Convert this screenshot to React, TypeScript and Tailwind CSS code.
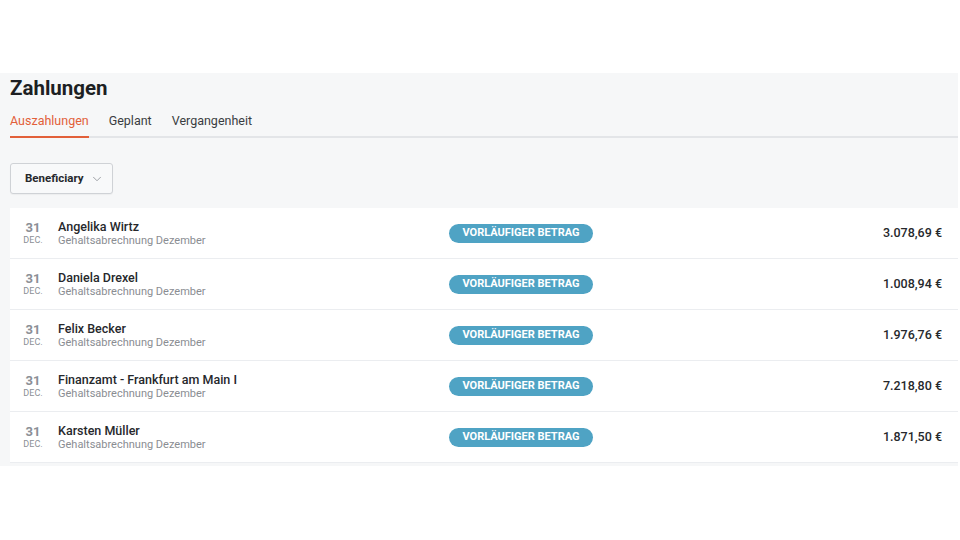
import { ChevronDown } from 'lucide-react';

const payouts = [
  { id: 1, name: 'Angelika Wirtz', amount: '3.078,69 €' },
  { id: 2, name: 'Daniela Drexel', amount: '1.008,94 €' },
  { id: 3, name: 'Felix Becker', amount: '1.976,76 €' },
  { id: 4, name: 'Finanzamt - Frankfurt am Main I', amount: '7.218,80 €' },
  { id: 5, name: 'Karsten Müller', amount: '1.871,50 €' },
];

const tabs = ['Auszahlungen', 'Geplant', 'Vergangenheit'];

const App = () => {
  return (
    <div className="w-[960px] h-[540px] bg-white pt-[73px] font-['Roboto',sans-serif]">
      <div className="w-[958px] h-[393px] bg-[#f6f7f8] pl-[10px] overflow-hidden">
        <h1 className="text-[20.5px] font-bold text-[#1d1f23] leading-[28px] pt-[1px]">Zahlungen</h1>

        {/* Tabs */}
        <div className="flex gap-[20px] mt-[4px] border-b-[2px] border-[#e3e5e8] h-[32px]">
          {tabs.map((t, i) => (
            <div
              key={t}
              className={
                i === 0
                  ? 'text-[12.5px] text-[#e2603a] border-b-[2px] border-[#e2603a] -mb-[2px] pt-[2px] leading-[26px]'
                  : 'text-[12.5px] text-[#3a3d42] pt-[2px] leading-[26px]'
              }
            >
              {t}
            </div>
          ))}
        </div>

        {/* Filter */}
        <div className="mt-[25px]">
          <button className="flex items-center h-[31px] w-[103px] border border-[#cfd2d6] rounded-[3px] bg-[#f8f9fa] pl-[14px] shadow-[0_1px_1px_rgba(0,0,0,0.04)]">
            <span className="text-[11.5px] font-bold text-[#26282c]">Beneficiary</span>
            <ChevronDown className="ml-[6px] text-[#8a8e94]" size={14} strokeWidth={1.4} />
          </button>
        </div>

        {/* List */}
        <div className="mt-[14px] bg-white">
          {payouts.map((p) => (
            <div key={p.id} className="flex items-center h-[51px] border-b border-[#ebedf0] pl-[11px] pr-[16px]">
              <div className="w-6 flex flex-col items-center">
                <span className="text-[13px] font-bold text-[#8b8f96] leading-[13px]">31</span>
                <span className="text-[9px] text-[#8b8f96] leading-[11px] mt-[1px]">DEC.</span>
              </div>
              <div className="ml-[13px] w-[391px] flex flex-col">
                <span className="text-[12.5px] font-medium text-[#26282c] leading-[15px]">{p.name}</span>
                <span className="text-[11px] text-[#8a8d92] leading-[14px]">Gehaltsabrechnung Dezember</span>
              </div>
              <div className="h-[19px] w-[144px] rounded-full bg-[#4fa3c4] flex items-center justify-center">
                <span className="text-[11px] font-bold text-white">VORLÄUFIGER BETRAG</span>
              </div>
              <div className="flex-1 text-right text-[12.5px] font-medium text-[#26282c]">{p.amount}</div>
            </div>
          ))}
        </div>
      </div>
    </div>
  );
};

export default App;
